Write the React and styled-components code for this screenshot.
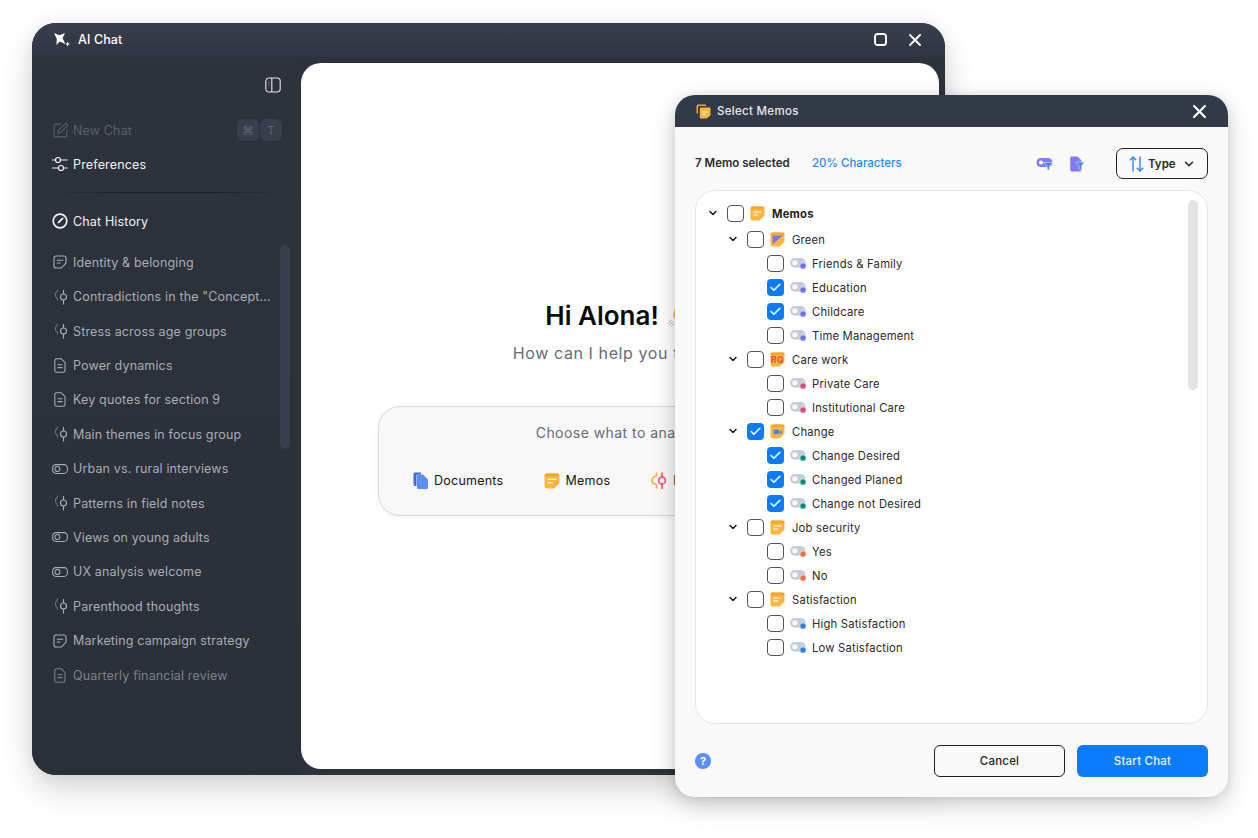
import React from 'react';
import styled, { createGlobalStyle } from 'styled-components';
import { Check, ChevronDown, SquarePen } from 'lucide-react';

const GlobalStyle = createGlobalStyle`
  html, body {
    margin: 0;
    padding: 0;
    background: #fff;
    font-family: "Inter", "Liberation Sans", sans-serif;
    -webkit-font-smoothing: antialiased;
  }
  * { box-sizing: border-box; }
`;

const Desktop = styled.div`
  position: relative;
  width: 1258px;
  height: 838px;
  overflow: hidden;
  background: #fff;
`;

/* ---------- main window ---------- */
const ChatWindow = styled.div`
  position: absolute;
  left: 32px;
  top: 23px;
  width: 913px;
  height: 752px;
  display: flex;
  flex-direction: column;
  border-radius: 24px;
  overflow: hidden;
  background: #2c313b;
  box-shadow: 0 14px 32px rgba(0, 0, 0, 0.16), 0 0 18px rgba(0, 0, 0, 0.06);
`;

const TitleBar = styled.div`
  height: 34px;
  flex: none;
  display: flex;
  align-items: center;
  padding: 0 24px 1px 21px;
  gap: 6px;
  color: #fff;
  background: linear-gradient(#383e4b, #2f3541);
`;

const TitleText = styled.span`
  flex: 1;
  font-size: 12.5px;
  font-weight: 500;
  letter-spacing: 0.1px;
`;

const WindowButton = styled.span`
  display: flex;
  align-items: center;
  justify-content: center;
  margin-left: 16px;
`;

const WindowBody = styled.div`
  flex: 1;
  display: flex;
  min-height: 0;
`;

const Sidebar = styled.aside`
  width: 269px;
  flex: none;
  padding: 16px 0 0 21px;
  background: linear-gradient(#2d323c, #2a2f38);
`;

const PanelRow = styled.div`
  height: 24px;
  margin: 0 20px 16px 0;
  display: flex;
  align-items: center;
  justify-content: flex-end;
`;

const NavRow = styled.div`
  height: 34px;
  margin-right: 19px;
  display: flex;
  align-items: center;
  gap: 6px;
  font-size: 12.5px;
  letter-spacing: 0.15px;
  color: ${(p) => (p.$dim ? '#5a5f69' : '#f2f3f5')};
  font-weight: 400;
`;

const NavIcon = styled.span`
  width: 14px;
  height: 18px;
  flex: none;
  display: flex;
  align-items: center;
  justify-content: center;
  svg { flex: none; }
`;

const NavLabel = styled.span`
  flex: 1;
  white-space: nowrap;
`;

const Keys = styled.span`
  display: flex;
  gap: 1px;
`;

const Key = styled.span`
  width: 22px;
  height: 22px;
  border-radius: 6px;
  background: #383e4a;
  color: #5e636e;
  font-size: 12px;
  display: flex;
  align-items: center;
  justify-content: center;
`;

const Divider = styled.div`
  height: 1px;
  margin: 11px 19px 11px 0;
  background: linear-gradient(90deg, transparent, #1c1f24 30%, #1c1f24 70%, transparent);
`;

const History = styled.div`
  position: relative;
  margin-top: 7px;
`;

const ScrollThumb = styled.div`
  position: absolute;
  right: 11px;
  top: 0;
  width: 10px;
  height: 204px;
  border-radius: 5px;
  background: #383e4b;
`;

const HistoryRow = styled.div`
  height: 34.42px;
  display: flex;
  align-items: center;
  gap: 6px;
  font-size: 12.5px;
  letter-spacing: 0.15px;
  white-space: nowrap;
  color: ${(p) => (p.$faded ? '#7c808a' : '#a9adb6')};
`;

const Main = styled.main`
  flex: 1;
  margin: 6px 6px 6px 0;
  border-radius: 20px;
  background: #fff;
  display: flex;
  flex-direction: column;
  align-items: center;
  padding-top: 237px;
`;

const Greeting = styled.h1`
  margin: 0;
  height: 32px;
  display: flex;
  align-items: center;
  gap: 8px;
  font-size: 26px;
  line-height: 32px;
  font-weight: 600;
  color: #0a0a0a;
`;

const Subtitle = styled.p`
  margin: 10px 0 0;
  height: 22px;
  line-height: 22px;
  font-size: 16px;
  letter-spacing: 0.6px;
  color: #646b78;
`;

const StartCard = styled.section`
  margin-top: 42px;
  width: 484px;
  height: 110px;
  border: 1px solid #d8d8d8;
  border-radius: 22px;
  background: #f8f8f8;
  box-shadow: 0 2px 6px rgba(0, 0, 0, 0.05);
  padding-top: 16px;
`;

const StartTitle = styled.div`
  text-align: center;
  height: 20px;
  line-height: 20px;
  font-size: 14px;
  letter-spacing: 0.45px;
  color: #646b78;
`;

const Sources = styled.div`
  margin-top: 29px;
  padding-left: 34px;
  display: flex;
  gap: 41px;
`;

const Source = styled.span`
  display: flex;
  align-items: center;
  gap: 5px;
  font-size: 12.5px;
  font-weight: 400;
  letter-spacing: 0.24px;
  color: #141414;
`;

/* ---------- dialog ---------- */
const Dialog = styled.div`
  position: absolute;
  left: 675px;
  top: 95px;
  width: 553px;
  height: 702px;
  display: flex;
  flex-direction: column;
  border-radius: 20px;
  overflow: hidden;
  background: #f9f9f9;
  box-shadow: 0 8px 24px rgba(0, 0, 0, 0.2), 0 0 10px rgba(0, 0, 0, 0.08);
`;

const DialogHeader = styled.header`
  height: 32px;
  flex: none;
  display: flex;
  align-items: center;
  gap: 6px;
  padding: 0 22px 0 21px;
  background: #333a47;
  color: #e9eaec;
  font-size: 11.5px;
  font-weight: 500;
  letter-spacing: 0.3px;
`;

const DialogTitle = styled.span`
  flex: 1;
`;

const DialogBody = styled.div`
  flex: 1;
  display: flex;
  flex-direction: column;
  padding: 21px 20px 20px;
  min-height: 0;
`;

const Toolbar = styled.div`
  height: 31px;
  flex: none;
  margin-bottom: 11px;
  display: flex;
  align-items: center;
  font-size: 11.5px;
  font-weight: 500;
`;

const SelectedCount = styled.span`
  width: 117px;
  padding-bottom: 2px;
  font-weight: 600;
  color: #2b2b2b;
`;

const CharCount = styled.span`
  flex: 1;
  padding-bottom: 2px;
  color: #1e8bff;
`;

const FilterIcon = styled.span`
  display: flex;
  margin-right: ${(p) => p.$gap}px;
`;

const TypeButton = styled.button`
  width: 92px;
  height: 31px;
  border: 1px solid #222;
  border-radius: 7px;
  background: transparent;
  padding: 0 0 0 12px;
  display: flex;
  align-items: center;
  gap: 4px;
  font: 600 11.5px "Inter", sans-serif;
  color: #2b2b2b;
`;

const TreeCard = styled.div`
  position: relative;
  flex: 1;
  min-height: 0;
  border: 1px solid #e4e4e6;
  border-radius: 20px;
  background: #fff;
  padding-top: 10px;
`;

const TreeThumb = styled.div`
  position: absolute;
  right: 9px;
  top: 9px;
  width: 10px;
  height: 190px;
  border-radius: 5px;
  background: #e3e3e5;
`;

const TreeRow = styled.div`
  height: 24px;
  display: flex;
  align-items: center;
  padding-left: ${(p) => [11, 31, 71][p.$level]}px;
  margin-bottom: ${(p) => (p.$level === 0 ? 2 : 0)}px;
  font-size: 11.25px;
  letter-spacing: 0.2px;
  font-weight: ${(p) => (p.$level === 0 ? 700 : 400)};
  color: ${(p) => (p.$level === 0 ? '#1d1d1d' : '#2a2a2a')};
`;

const TreeLabel = styled.span`
  padding-top: 2px;
`;

const Chevron = styled.span`
  width: 12px;
  margin-right: 8px;
  display: flex;
  justify-content: center;
  color: #1a1a1a;
`;

const Box = styled.span`
  width: 17px;
  height: 17px;
  flex: none;
  border-radius: 4px;
  display: flex;
  align-items: center;
  justify-content: center;
  border: ${(p) => (p.$checked ? 'none' : '1.6px solid #555')};
  background: ${(p) => (p.$checked ? '#0a7cff' : '#fff')};
  color: #fff;
  margin-right: 6px;
`;

const RowIcon = styled.span`
  display: flex;
  margin-right: ${(p) => (p.$level === 2 ? 6 : 7)}px;
  svg { overflow: visible; }
`;

const DialogFooter = styled.footer`
  height: 32px;
  flex: none;
  margin-top: 21px;
  display: flex;
  align-items: center;
  gap: 12px;
`;

const Help = styled.span`
  width: 16px;
  height: 16px;
  margin-right: auto;
  border-radius: 50%;
  background: #5b8ff0;
  color: #fff;
  font-size: 11px;
  font-weight: 700;
  display: flex;
  align-items: center;
  justify-content: center;
`;

const FooterButton = styled.button`
  width: 131px;
  height: 32px;
  border-radius: 6px;
  border: ${(p) => (p.$primary ? 'none' : '1px solid #1f1f1f')};
  background: ${(p) => (p.$primary ? '#0a7cff' : 'transparent')};
  color: ${(p) => (p.$primary ? '#eaf3ff' : '#1f1f1f')};
  font: 500 11.5px "Inter", sans-serif;
  letter-spacing: 0.2px;
`;

/* ---------- icons ---------- */
const SparkIcon = () => (
  <svg width="19" height="16" viewBox="0 0 19 16" fill="#fff">
    <path d="M1 1 L6.4 3.2 L12 1 L9.6 6.2 L12.4 12 L6.8 9.6 L3.4 13 L3.8 7 Z" />
    <path d="M14.6 9.5 L15.3 11.3 L17 12 L15.3 12.7 L14.6 14.5 L13.9 12.7 L12.2 12 L13.9 11.3 Z" />
  </svg>
);

const MaximizeIcon = () => (
  <svg width="13" height="13" viewBox="0 0 13 13" fill="none" stroke="#fff" strokeWidth="1.9">
    <rect x="1" y="1" width="11" height="11" rx="2.6" />
  </svg>
);

const CloseIcon = ({ size = 12, weight = 1.9 }) => (
  <svg width={size} height={size} viewBox="0 0 12 12" fill="none" stroke="#fff" strokeWidth={weight} strokeLinecap="round">
    <path d="M1 1l10 10M11 1L1 11" />
  </svg>
);

const PanelIcon = () => (
  <svg width="16" height="16" viewBox="0 0 16 16" fill="none" stroke="#e6e7ea" strokeWidth="1.1">
    <rect x="0.8" y="1" width="14.4" height="14" rx="3.2" />
    <path d="M6.8 1v14" />
    <path d="M4 5v.8M4 7.6v.8" strokeWidth="1" />
  </svg>
);

const SlidersIcon = () => (
  <svg width="16" height="16" viewBox="0 0 16 16" fill="none" stroke="#f2f3f5" strokeWidth="1.15">
    <path d="M0 4h3M9 4h6.5M0 12h6M12 12h3.5" />
    <circle cx="6" cy="4" r="2.5" />
    <circle cx="9" cy="12" r="2.5" />
  </svg>
);

const GaugeIcon = () => (
  <svg width="16" height="16" viewBox="0 0 16 16" fill="none" stroke="#f2f3f5" strokeWidth="1.7">
    <circle cx="8" cy="8" r="6.8" />
    <path d="M6.6 9.4 L10.6 5.4" strokeWidth="1.9" strokeLinecap="round" />
  </svg>
);

const NoteIcon = () => (
  <svg width="14" height="14" viewBox="0 0 14 14" fill="none" stroke="currentColor" strokeWidth="1.1">
    <path d="M3 1h8a2 2 0 0 1 2 2v5l-4.6 5H3a2 2 0 0 1-2-2V3a2 2 0 0 1 2-2z" />
    <path d="M3.8 5.3h6.4M3.8 8h3.6" />
  </svg>
);

const CodeIcon = () => (
  <svg width="16" height="18" viewBox="0 0 16 18" fill="none" stroke="currentColor" strokeWidth="1.15" style={{ marginLeft: 1 }}>
    <path d="M4.4 1.5v2M4.4 10.5v2M4.2 3.5C1.8 4.5 1.8 9 4.2 10.5" opacity="0.5" />
    <circle cx="10.5" cy="9" r="3" />
    <path d="M10.5 2v4M10.5 12v4.5" />
  </svg>
);

const FileIcon = () => (
  <svg width="12" height="15" viewBox="0 0 12 15" fill="none" stroke="currentColor" strokeWidth="1.05">
    <path d="M2.5 0.8h4.7L11 4.4v7.8a2 2 0 0 1-2 2H2.5a1.7 1.7 0 0 1-1.7-1.7V2.5a1.7 1.7 0 0 1 1.7-1.7z" />
    <path d="M3.6 6.8h4.8M3.6 9.6h4.8" />
  </svg>
);

const PillIcon = () => (
  <svg width="16" height="10" viewBox="0 0 16 10" fill="none" stroke="currentColor" strokeWidth="1.05">
    <rect x="0.6" y="0.6" width="14.8" height="8.8" rx="3.4" />
    <circle cx="5.4" cy="5" r="2.5" />
  </svg>
);

const historyIcons = { note: NoteIcon, code: CodeIcon, file: FileIcon, pill: PillIcon };

const WaveIcon = () => (
  <svg width="28" height="28" viewBox="0 0 28 28" fill="none">
    <path d="M0.6 22l4-4.4M2 23.6l4.4-4.6M3.8 25l4-4.2" stroke="#a3a3a3" strokeWidth="0.8" />
    <path d="M6 14L9 2h19v24H14z" fill="#f6b73c" />
    <path d="M8 10l5-4M8 14l6-5M10 17l6-5" stroke="#e2912a" strokeWidth="1.5" />
  </svg>
);

const DocsIcon = () => (
  <svg width="16" height="17" viewBox="0 0 16 17">
    <path d="M2 0.5h6v2H5a1.5 1.5 0 0 0-1.5 1.5v10H2A1.5 1.5 0 0 1 .5 12.5V2A1.5 1.5 0 0 1 2 .5z" fill="#3f6fc4" />
    <path d="M5.5 2.5h4.5l5 5v8a1.5 1.5 0 0 1-1.5 1.5h-8A1.5 1.5 0 0 1 4 15.5V4a1.5 1.5 0 0 1 1.5-1.5z" fill="#5b8ff0" />
  </svg>
);

const ForkIcon = () => (
  <svg width="17" height="17" viewBox="0 0 17 17" fill="none" strokeWidth="1.7">
    <path d="M5.5 0.5v3.5M5.5 12.5v4M5.5 4C-0.6 5 -0.6 11.5 5.5 12.5" stroke="#f5b13c" />
    <circle cx="11" cy="8.5" r="3.4" stroke="#ee5a7a" />
    <path d="M11 0.5v4.6M11 11.9v5" stroke="#ee5a7a" />
  </svg>
);

const MemoIcon = ({ size = 15, variant }) => (
  <svg width={size} height={size} viewBox="0 0 15 15">
    <path d="M2.5 0.5h10a2 2 0 0 1 2 2v7.2L9.7 14.5H2.5a2 2 0 0 1-2-2v-10a2 2 0 0 1 2-2z" fill="#fcb640" />
    <path d="M0.5 2.5a2 2 0 0 1 2-2h10a2 2 0 0 1 2 2V3H.5z" fill="#f4a52b" />
    {!variant && <path d="M3.5 6h8M3.5 9h4.5" stroke="#fff" strokeWidth="1.1" fill="none" />}
    {variant === 'green' && <path d="M2.6 3.4h10L2.6 12.6z" fill="#7b74f2" />}
    {variant === 'rq' && (
      <text x="7.4" y="11.2" textAnchor="middle" fontSize="9" fontWeight="700" fontFamily="Inter" fill="#e2503c">RQ</text>
    )}
    {variant === 'video' && (
      <g fill="#4f83e8">
        <rect x="3.6" y="5.6" width="5.4" height="4.6" rx="0.8" />
        <path d="M9.4 7.4l2.4-1.3v4.2L9.4 9z" />
      </g>
    )}
  </svg>
);

const StackedMemoIcon = () => (
  <svg width="15" height="15" viewBox="0 0 15 15">
    <path d="M2 0.5h8v1.6H4a1.6 1.6 0 0 0-2 1.6v6H1.6A1.2 1.2 0 0 1 .5 8.5V2A1.5 1.5 0 0 1 2 .5z" fill="#f3a833" />
    <path d="M5 3.5h8.5a1 1 0 0 1 1 1v6.7L10.7 14.5H5a1.2 1.2 0 0 1-1.2-1.2V4.7A1.2 1.2 0 0 1 5 3.5z" fill="#fcb640" />
    <path d="M6.2 8h6M6.2 10.6h3.6" stroke="#fff" strokeWidth="1" />
  </svg>
);

const LeafIcon = ({ color }) => (
  <svg width="16" height="10" viewBox="0 0 16 10">
    <rect x="0" y="0" width="15.6" height="9.6" rx="4.8" fill="#c6ccd8" />
    <circle cx="4.9" cy="4.8" r="2.5" fill="#fff" />
    <circle cx="13" cy="8" r="3.1" fill={color} stroke="#fff" strokeWidth="0.5" />
  </svg>
);

const Funnel = ({ x, y }) => (
  <path transform={`translate(${x} ${y})`} d="M0 0h8.6L5.5 3.6V8L3.1 6.6v-3z" fill="#3d86e6" stroke="#fff" strokeWidth="0.5" />
);

const PillFilterIcon = () => (
  <svg width="17" height="14" viewBox="0 0 17 14">
    <rect x="0.5" y="1" width="16" height="9" rx="4.5" fill="#8479fa" />
    <circle cx="5" cy="5.5" r="2" fill="#fff" />
    <Funnel x={8} y={5.5} />
  </svg>
);

const DocFilterIcon = () => (
  <svg width="15" height="16" viewBox="0 0 15 16">
    <path d="M1.6 0.5h5.9L11.5 4.5v9.6a1.4 1.4 0 0 1-1.4 1.4H1.6A1.4 1.4 0 0 1 .2 14.1V1.9A1.4 1.4 0 0 1 1.6.5z" fill="#8479fa" />
    <Funnel x={6} y={6.2} />
  </svg>
);

const SortIcon = () => (
  <svg width="15" height="16" viewBox="0 0 15 16" fill="none" stroke="#3d8cf0" strokeWidth="1.5">
    <path d="M4 15.5V1M0.8 4.2L4 1l3.2 3.2M11 0.5V15M7.8 11.8L11 15l3.2-3.2" />
  </svg>
);

/* ---------- data ---------- */
const history = [
  ['note', 'Identity & belonging'],
  ['code', 'Contradictions in the "Concept...'],
  ['code', 'Stress across age groups'],
  ['file', 'Power dynamics'],
  ['file', 'Key quotes for section 9'],
  ['code', 'Main themes in focus group'],
  ['pill', 'Urban vs. rural interviews'],
  ['code', 'Patterns in field notes'],
  ['pill', 'Views on young adults'],
  ['pill', 'UX analysis welcome'],
  ['code', 'Parenthood thoughts'],
  ['note', 'Marketing campaign strategy'],
  ['file', 'Quarterly financial review'],
];

const PURPLE = '#6f6bff';
const PINK = '#e0457b';
const TEAL = '#0e8f7a';
const ORANGE = '#f56b3a';
const BLUE = '#2f7bf0';

const tree = [
  { level: 0, label: 'Memos' },
  { level: 1, label: 'Green', variant: 'green' },
  { level: 2, label: 'Friends & Family', color: PURPLE },
  { level: 2, label: 'Education', color: PURPLE, checked: true },
  { level: 2, label: 'Childcare', color: PURPLE, checked: true },
  { level: 2, label: 'Time Management', color: PURPLE },
  { level: 1, label: 'Care work', variant: 'rq' },
  { level: 2, label: 'Private Care', color: PINK },
  { level: 2, label: 'Institutional Care', color: PINK },
  { level: 1, label: 'Change', variant: 'video', checked: true },
  { level: 2, label: 'Change Desired', color: TEAL, checked: true },
  { level: 2, label: 'Changed Planed', color: TEAL, checked: true },
  { level: 2, label: 'Change not Desired', color: TEAL, checked: true },
  { level: 1, label: 'Job security' },
  { level: 2, label: 'Yes', color: ORANGE },
  { level: 2, label: 'No', color: ORANGE },
  { level: 1, label: 'Satisfaction' },
  { level: 2, label: 'High Satisfaction', color: BLUE },
  { level: 2, label: 'Low Satisfaction', color: BLUE },
];

export default function App() {
  return (
    <Desktop>
      <GlobalStyle />
      <ChatWindow>
        <TitleBar>
          <SparkIcon />
          <TitleText>AI Chat</TitleText>
          <WindowButton><MaximizeIcon /></WindowButton>
          <WindowButton><CloseIcon /></WindowButton>
        </TitleBar>
        <WindowBody>
          <Sidebar>
            <PanelRow><PanelIcon /></PanelRow>
            <NavRow $dim>
              <NavIcon><SquarePen size={17} color="#5a5f69" strokeWidth={1.5} /></NavIcon>
              <NavLabel>New Chat</NavLabel>
              <Keys><Key>⌘</Key><Key>T</Key></Keys>
            </NavRow>
            <NavRow>
              <NavIcon><SlidersIcon /></NavIcon>
              <NavLabel>Preferences</NavLabel>
            </NavRow>
            <Divider />
            <NavRow>
              <NavIcon><GaugeIcon /></NavIcon>
              <NavLabel>Chat History</NavLabel>
            </NavRow>
            <History>
              <ScrollThumb />
              {history.map(([icon, label], i) => {
                const Icon = historyIcons[icon];
                return (
                  <HistoryRow key={label} $faded={i === history.length - 1}>
                    <NavIcon><Icon /></NavIcon>
                    <span>{label}</span>
                  </HistoryRow>
                );
              })}
            </History>
          </Sidebar>
          <Main>
            <Greeting>Hi Alona! <WaveIcon /></Greeting>
            <Subtitle>How can I help you today?</Subtitle>
            <StartCard>
              <StartTitle>Choose what to analyze</StartTitle>
              <Sources>
                <Source><DocsIcon />Documents</Source>
                <Source><MemoIcon size={16} />Memos</Source>
                <Source><ForkIcon />Reports</Source>
              </Sources>
            </StartCard>
          </Main>
        </WindowBody>
      </ChatWindow>

      <Dialog>
        <DialogHeader>
          <StackedMemoIcon />
          <DialogTitle>Select Memos</DialogTitle>
          <CloseIcon size={13} weight={2} />
        </DialogHeader>
        <DialogBody>
          <Toolbar>
            <SelectedCount>7 Memo selected</SelectedCount>
            <CharCount>20% Characters</CharCount>
            <FilterIcon $gap={17}><PillFilterIcon /></FilterIcon>
            <FilterIcon $gap={31}><DocFilterIcon /></FilterIcon>
            <TypeButton>
              <SortIcon />
              Type
              <ChevronDown size={14} strokeWidth={2.8} style={{ marginLeft: 2 }} />
            </TypeButton>
          </Toolbar>
          <TreeCard>
            <TreeThumb />
            {tree.map((row) => (
              <TreeRow key={row.label} $level={row.level}>
                {row.level < 2 && (
                  <Chevron><ChevronDown size={14} strokeWidth={3} /></Chevron>
                )}
                <Box $checked={row.checked}>
                  {row.checked && <Check size={13} strokeWidth={3} />}
                </Box>
                <RowIcon $level={row.level}>
                  {row.level === 2 ? <LeafIcon color={row.color} /> : <MemoIcon variant={row.variant} />}
                </RowIcon>
                <TreeLabel>{row.label}</TreeLabel>
              </TreeRow>
            ))}
          </TreeCard>
          <DialogFooter>
            <Help>?</Help>
            <FooterButton>Cancel</FooterButton>
            <FooterButton $primary>Start Chat</FooterButton>
          </DialogFooter>
        </DialogBody>
      </Dialog>
    </Desktop>
  );
}
